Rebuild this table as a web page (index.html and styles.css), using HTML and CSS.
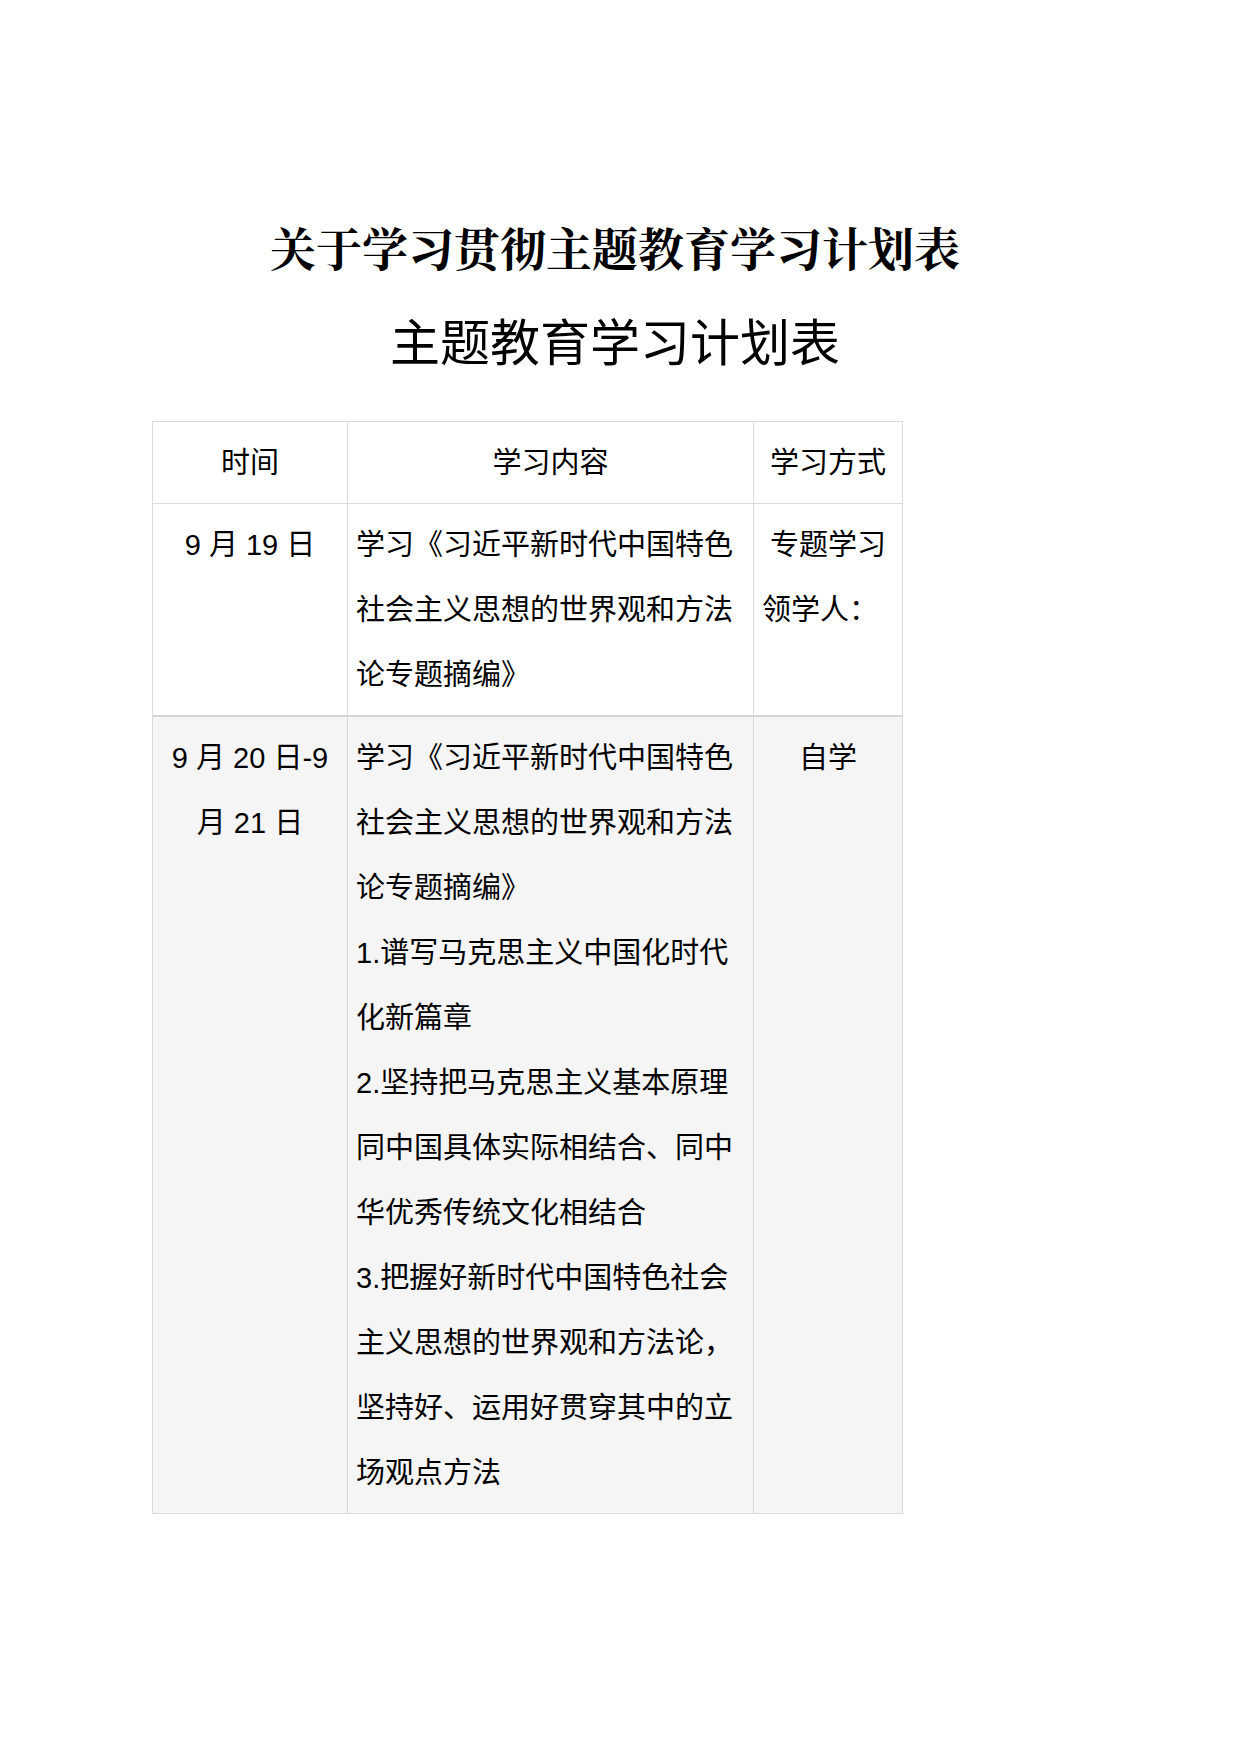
FILE: index.html
```html
<!DOCTYPE html>
<html lang="zh-CN">
<head>
<meta charset="utf-8">
<title>关于学习贯彻主题教育学习计划表</title>
<link rel="stylesheet" href="styles.css">
</head>
<body>
<div class="page">
  <h1 class="title-main">关于学习贯彻主题教育学习计划表</h1>
  <h2 class="title-sub">主题教育学习计划表</h2>
  <div class="plan">
    <div class="cell head c1">时间</div>
    <div class="cell head c2">学习内容</div>
    <div class="cell head c3">学习方式</div>

    <div class="cell r1 center">9 月 19 日</div>
    <div class="cell r1">学习《习近平新时代中国特色社会主义思想的世界观和方法论专题摘编》</div>
    <div class="cell r1 c3"><div class="center">专题学习</div><div>领学人：</div></div>

    <div class="cell r2 center">9 月 20 日-9 月 21 日</div>
    <div class="cell r2">
      <p>学习《习近平新时代中国特色社会主义思想的世界观和方法论专题摘编》</p>
      <p>1.谱写马克思主义中国化时代化新篇章</p>
      <p>2.坚持把马克思主义基本原理同中国具体实际相结合、同中华优秀传统文化相结合</p>
      <p>3.把握好新时代中国特色社会主义思想的世界观和方法论，坚持好、运用好贯穿其中的立场观点方法</p>
    </div>
    <div class="cell r2 center c3">自学</div>
  </div>
</div>
</body>
</html>
```
FILE: styles.css
```css
html, body {
  margin: 0;
  padding: 0;
  background: #ffffff;
}
.page {
  padding-top: 216px;
  color: #000;
}
.title-main {
  margin: 0;
  padding-right: 10px;
  text-align: center;
  font-family: "AR PL UKai CN", "AR PL UKai TW", "Noto Serif CJK SC", "Noto Sans CJK SC", serif;
  font-size: 46px;
  line-height: 60px;
  font-weight: 700;
}
.title-sub {
  margin: 33px 0 0 0;
  padding-right: 10px;
  text-align: center;
  font-family: "Noto Sans CJK SC", sans-serif;
  font-size: 50px;
  line-height: 60px;
  font-weight: 400;
}
.plan {
  margin: 52px 0 0 152px;
  width: 750px;
  display: grid;
  grid-template-columns: 195px 406px 149px;
  border-left: 1px solid #dadada;
  border-top: 1px solid #dadada;
  font-family: "Liberation Sans", "Noto Sans CJK SC", sans-serif;
  font-size: 29px;
  line-height: 65px;
}
.cell {
  border-right: 1px solid #dadada;
  border-bottom: 1px solid #dadada;
  padding: 9px 8px 7px 8px;
  min-width: 0;
}
.cell p {
  margin: 0;
}
.head {
  text-align: center;
}
.center {
  text-align: center;
}
.r1 {
  border-bottom: 2px solid #d6d6d6;
}
.r2 {
  background: #f5f5f5;
}
```
